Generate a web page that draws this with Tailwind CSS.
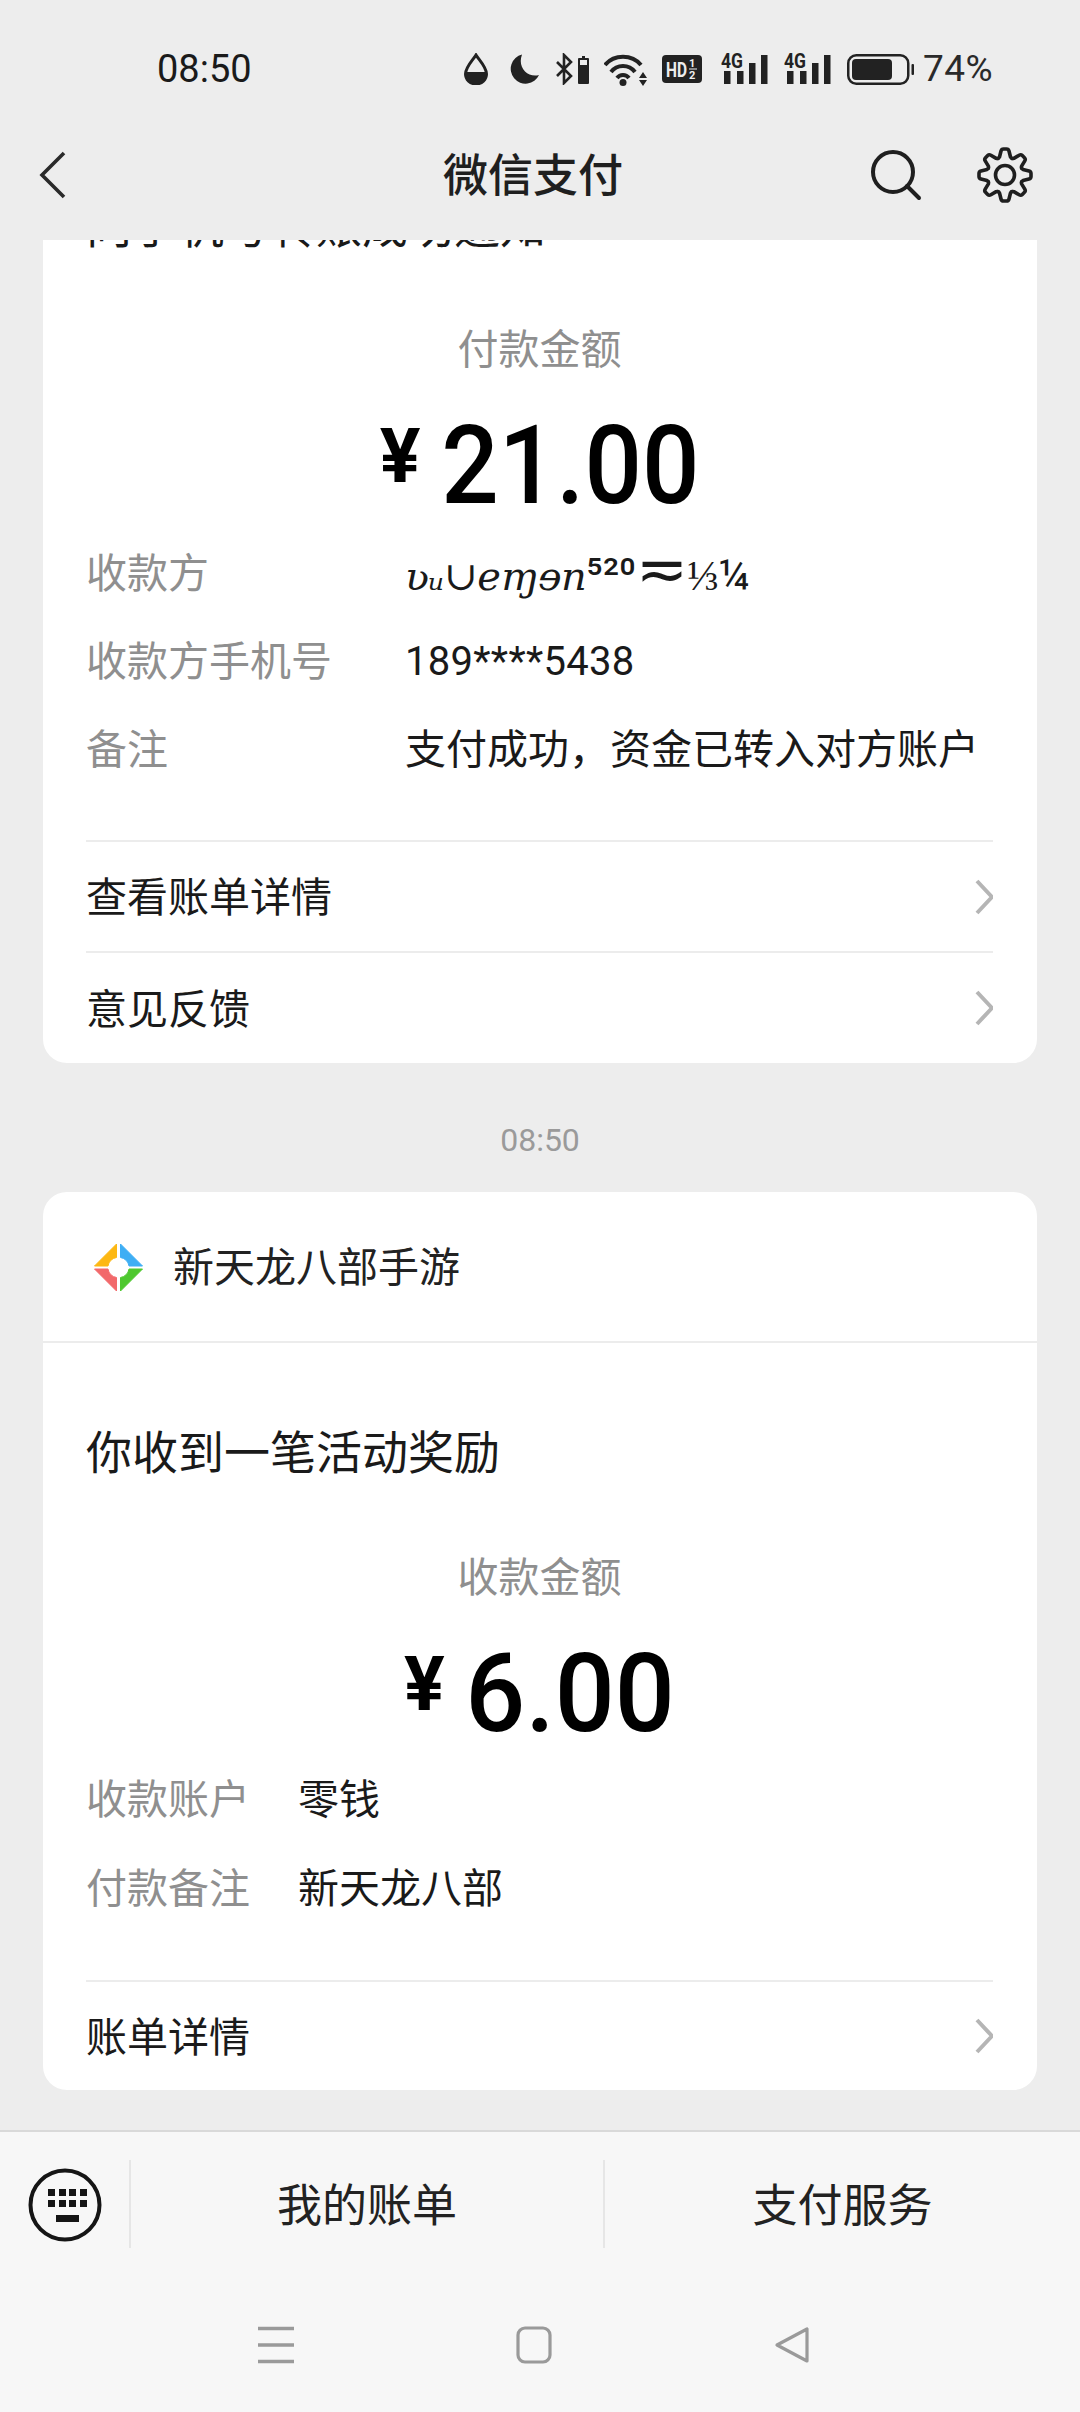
<!DOCTYPE html>
<html lang="zh-CN">
<head>
    <meta charset="UTF-8">
    <meta name="viewport" content="width=device-width, initial-scale=1.0">
    <title>微信支付</title>
    <script src="https://cdn.jsdelivr.net/npm/@tailwindcss/browser@4"></script>
</head>
<body class="font-['Roboto','Noto_Sans_CJK_SC',sans-serif]">
<div class="w-[1080px] h-[2412px] flex flex-col bg-[#ededed] overflow-hidden text-[#1a1a1a]">

    <!-- status bar + title bar -->
    <header class="h-[240px] shrink-0 bg-[#ededed] relative z-10 flex flex-col">
        <div class="h-[138px] flex items-center pl-[157px]">
            <div class="w-[307px] text-[38px] leading-[40px]">08:50</div>
            <div class="flex items-center text-[#222]">
                <svg class="w-[24px] h-[32px]" viewBox="0 0 24 32"><path d="M12 2C9 7 1.500 14 1.500 21a10.500 10 0 0 0 21 0C22.500 14 15 7 12 2Z" fill="none" stroke="#222" stroke-width="3"/><path d="M1.500 19h21v2a10.500 10 0 0 1-21 0Z" fill="#222"/></svg>
                <svg class="w-[30px] h-[30px] ml-[21px]" viewBox="0 0 30 30"><path d="M13 0.500A14.800 14.800 0 1 0 30 21C19 24 8 14 13 0.500Z" fill="#222"/></svg>
                <svg class="w-[19px] h-[32px] ml-[16px]" viewBox="0 0 19 32"><path d="M2 9l14 14-7 7V2l7 7L2 23" fill="none" stroke="#222" stroke-width="2.600"/></svg>
                <svg class="w-[11px] h-[32px] ml-[4px]" viewBox="0 0 11 32"><path d="M4 3h3v2h3a1 1 0 0 1 1 1v24a1 1 0 0 1-1 1H1a1 1 0 0 1-1-1V6a1 1 0 0 1 1-1h3Z" fill="#222"/><rect x="2" y="7" width="7" height="5" fill="#ededed"/></svg>
                <svg class="w-[44px] h-[33px] ml-[15px]" viewBox="0 0 44 33"><g fill="none" stroke="#222" stroke-width="4"><path d="M1 12C10 1 28 1 37 12"/><path d="M7 19C13 11 25 11 31 19"/><path d="M13 25C16 21 22 21 25 25"/></g><circle cx="19" cy="29.500" r="3.500" fill="#222"/><path d="M39 19l4 6h-8ZM39 33l-4-6h8Z" fill="#222"/></svg>
                <svg class="w-[40px] h-[28px] ml-[14px]" viewBox="0 0 40 28"><rect width="40" height="28" rx="4" fill="#222"/><text x="4" y="22" font-family="Roboto" font-weight="700" font-size="20" textLength="21" lengthAdjust="spacingAndGlyphs" fill="#ededed">HD</text><text x="27" y="12" font-family="Roboto" font-weight="700" font-size="11" fill="#ededed">1</text><text x="27" y="24" font-family="Roboto" font-weight="700" font-size="11" fill="#ededed">2</text><rect x="27" y="13.500" width="8" height="1" fill="#ededed"/></svg>
                <svg class="w-[47px] h-[38px] -mt-[6px] ml-[19px]" viewBox="0 -6 47 38"><text x="0" y="15" font-family="Roboto" font-weight="700" font-size="21" textLength="22" lengthAdjust="spacingAndGlyphs" fill="#222">4G</text><path d="M3 18h6.500v13H3ZM16 18h6.500v13H16ZM28 10h6.500v21H28ZM40 2h6.500v29H40Z" fill="#222"/></svg>
                <svg class="w-[47px] h-[38px] -mt-[6px] ml-[16px]" viewBox="0 -6 47 38"><text x="0" y="15" font-family="Roboto" font-weight="700" font-size="21" textLength="22" lengthAdjust="spacingAndGlyphs" fill="#222">4G</text><path d="M3 18h6.500v13H3ZM16 18h6.500v13H16ZM28 10h6.500v21H28ZM40 2h6.500v29H40Z" fill="#222"/></svg>
                <svg class="w-[67px] h-[31px] ml-[16px]" viewBox="0 0 67 31"><rect x="1.250" y="1.250" width="60" height="28.500" rx="8" fill="none" stroke="#222" stroke-width="2.500"/><rect x="5" y="5" width="40" height="21" rx="4" fill="#222"/><rect x="64.500" y="10" width="2.500" height="11" rx="1" fill="#222"/></svg>
                <div class="ml-[9px] text-[37px] leading-[40px] tracking-[0.5px] text-[#2a2a2a]">74%</div>
            </div>
        </div>
        <div class="flex-1 relative flex items-center justify-center -mt-[28px] pt-[3px] pr-[14px]">
            <svg class="absolute left-[38px] top-[41px] w-[30px] h-[48px]" viewBox="0 0 30 48"><path d="M26 2L4 24l22 22" fill="none" stroke="#2a2a2a" stroke-width="3.600"/></svg>
            <div class="text-[45px] leading-[60px] text-[#1f1f1f] font-medium">微信支付</div>
            <svg class="absolute left-[868px] top-[38px] w-[56px] h-[56px]" viewBox="0 0 56 56"><circle cx="25" cy="24" r="20" fill="none" stroke="#1f1f1f" stroke-width="4"/><path d="M39 38l12 12" stroke="#1f1f1f" stroke-width="4" stroke-linecap="round"/></svg>
            <svg class="absolute left-[975px] top-[35px] w-[60px] h-[60px]" viewBox="-30 -30 60 60">
                <g fill="none" stroke="#1f1f1f" stroke-width="3.600" stroke-linejoin="round" stroke-linecap="round">
                    <g id="tooth"><path d="M-6.890-16.630Q-6-17-5.500-18L-4-24Q-3.500-26-1.500-26H1.500Q3.500-26 4-24L5.500-18Q6-17 6.890-16.630"/></g>
                    <use href="#tooth" transform="rotate(45)"/>
                    <use href="#tooth" transform="rotate(90)"/>
                    <use href="#tooth" transform="rotate(135)"/>
                    <use href="#tooth" transform="rotate(180)"/>
                    <use href="#tooth" transform="rotate(225)"/>
                    <use href="#tooth" transform="rotate(270)"/>
                    <use href="#tooth" transform="rotate(315)"/>
                    <circle r="9.500"/>
                </g>
            </svg>
        </div>
    </header>

    <main class="flex-1 px-[43px] min-h-0">
        <!-- first message, scrolled under the title bar -->
        <section class="bg-white rounded-b-[24px] -mt-[43px] pl-[43px] pr-[44px]">
            <div class="text-[46px] leading-[60px] text-[#1a1a1a]">向手机号转账成功通知</div>
            <div class="mt-[63px] text-center text-[41px] leading-[60px] text-[#8f8f8f]">付款金额</div>
            <div class="mt-[30px] h-[110px] pt-[2px] flex items-center justify-center text-black">
                <span class="text-[76px] leading-[110px] font-bold mr-[20px] -mt-[20px]">¥</span>
                <span class="text-[110px] leading-[110px] font-medium scale-x-[0.92] -mx-[11px]">21.00</span>
            </div>
            <div class="mt-[24px] flex flex-col gap-[28px] text-[41px] leading-[60px]">
                <div class="flex h-[60px]"><div class="w-[319px] text-[#8f8f8f]">收款方</div><div class="h-[60px] font-['DejaVu_Serif','Roboto',serif] italic text-[40px] leading-[60px] whitespace-nowrap tracking-[-0.5px]">ʋᵤ∪eɱɘn<span class="not-italic font-['Roboto'] text-[45px] leading-[50px] tracking-normal">⁵²⁰</span><span class="not-italic font-['DejaVu_Sans'] font-extralight text-[62px] leading-[50px]">≂</span><span class="not-italic font-['Roboto'] text-[42px] leading-[50px] tracking-normal">⅓¼</span></div></div>
                <div class="flex"><div class="w-[319px] text-[#8f8f8f]">收款方手机号</div><div class="text-[40px] tracking-[0.3px]">189****5438</div></div>
                <div class="flex"><div class="w-[319px] text-[#8f8f8f]">备注</div><div>支付成功，资金已转入对方账户</div></div>
            </div>
            <div class="mt-[60px] h-[111px] pt-[5px] flex items-center justify-between border-t-2 border-[#ececec] text-[41px]">
                <span>查看账单详情</span>
                <svg class="w-[20px] h-[38px] -mt-[5px]" viewBox="0 0 20 38"><path d="M4 3l15 16L4 35" fill="none" stroke="#b5b5b5" stroke-width="4"/></svg>
            </div>
            <div class="h-[112px] pt-[5px] flex items-center justify-between border-t-2 border-[#ececec] text-[41px]">
                <span>意见反馈</span>
                <svg class="w-[20px] h-[38px] -mt-[5px]" viewBox="0 0 20 38"><path d="M4 3l15 16L4 35" fill="none" stroke="#b5b5b5" stroke-width="4"/></svg>
            </div>
        </section>

        <div class="mt-[57px] mb-[32px] h-[40px] text-center text-[32px] leading-[40px] text-[#9a9a9a]">08:50</div>

        <!-- second message -->
        <section class="bg-white rounded-[24px]">
            <div class="h-[151px] flex items-center pl-[51px] pt-[1px] border-b-2 border-[#ececec]">
                <svg class="w-[49px] h-[49px]" viewBox="0 0 49 49">
                    <path d="M22.500 1L0.500 23H14A10 10 0 0 1 22.500 14.500Z" fill="#fdb813" stroke="#fdb813" stroke-linejoin="round"/>
                    <path d="M26.500 1L48.500 23H35A10 10 0 0 0 26.500 14.500Z" fill="#3eaef4" stroke="#3eaef4" stroke-linejoin="round"/>
                    <path d="M22.500 48L0.500 26H14A10 10 0 0 0 22.500 34.500Z" fill="#f2696b" stroke="#f2696b" stroke-linejoin="round"/>
                    <path d="M26.500 48L48.500 26H35A10 10 0 0 1 26.500 34.500Z" fill="#4ec82f" stroke="#4ec82f" stroke-linejoin="round"/>
                </svg>
                <div class="ml-[30px] mt-[2px] text-[41px] leading-[60px] text-[#222]">新天龙八部手游</div>
            </div>
            <div class="pl-[43px] pr-[44px]">
                <div class="mt-[80px] text-[46px] leading-[60px]">你收到一笔活动奖励</div>
                <div class="mt-[65px] text-center text-[41px] leading-[60px] text-[#8f8f8f]">收款金额</div>
                <div class="mt-[30px] h-[110px] pt-[2px] flex items-center justify-center text-black">
                    <span class="text-[76px] leading-[110px] font-bold mr-[20px] -mt-[20px]">¥</span>
                    <span class="text-[110px] leading-[110px] font-medium scale-x-[0.96] -mx-[4px]">6.00</span>
                </div>
                <div class="mt-[22px] flex flex-col gap-[29px] text-[41px] leading-[60px]">
                    <div class="flex"><div class="w-[212px] text-[#8f8f8f]">收款账户</div><div>零钱</div></div>
                    <div class="flex"><div class="w-[212px] text-[#8f8f8f]">付款备注</div><div>新天龙八部</div></div>
                </div>
                <div class="mt-[61px] h-[110px] pt-[5px] flex items-center justify-between border-t-2 border-[#ececec] text-[41px]">
                    <span>账单详情</span>
                    <svg class="w-[20px] h-[38px] -mt-[6px]" viewBox="0 0 20 38"><path d="M4 3l15 16L4 35" fill="none" stroke="#b5b5b5" stroke-width="4"/></svg>
                </div>
            </div>
        </section>
    </main>

    <!-- bottom menu + system navigation -->
    <footer class="h-[282px] shrink-0 bg-[#f7f7f7] border-t-2 border-[#d9d9d9] relative z-10">
        <div class="mt-[28px] h-[88px] flex items-center">
            <div class="w-[131px] h-full flex items-center justify-center border-r-2 border-[#e6e6e6]">
                <svg class="w-[74px] h-[74px] mt-[2px]" viewBox="0 0 74 74">
                    <circle cx="37" cy="37" r="34.500" fill="none" stroke="#151515" stroke-width="4"/>
                    <path d="M20 21h7v7h-7ZM31 21h7v7h-7ZM41 21h7v7h-7ZM52 21h7v7h-7ZM20 32h7v7h-7ZM31 32h7v7h-7ZM41 32h7v7h-7ZM52 32h7v7h-7ZM28 47h23v7H28Z" fill="#151515"/>
                </svg>
            </div>
            <div class="w-[474px] h-full pt-[6px] flex items-center justify-center border-r-2 border-[#e6e6e6] text-[45px] text-[#222]">我的账单</div>
            <div class="w-[475px] h-full pt-[6px] flex items-center justify-center text-[45px] text-[#222]">支付服务</div>
        </div>
        <div class="mt-[78px] pl-[258px] flex items-center">
            <svg class="w-[36px] h-[38px]" viewBox="0 0 36 38"><path d="M0 2.500h36M0 19h36M0 35.500h36" stroke="#9a9a9a" stroke-width="3.400"/></svg>
            <svg class="w-[36px] h-[38px] ml-[222px]" viewBox="0 0 36 38"><rect x="2" y="2" width="32" height="34" rx="7" fill="none" stroke="#9a9a9a" stroke-width="3.200"/></svg>
            <svg class="w-[36px] h-[38px] ml-[222px]" viewBox="0 0 36 38"><path d="M33 3v32L3 19Z" fill="none" stroke="#9a9a9a" stroke-width="3.200" stroke-linejoin="round"/></svg>
        </div>
    </footer>
</div>
</body>
</html>
